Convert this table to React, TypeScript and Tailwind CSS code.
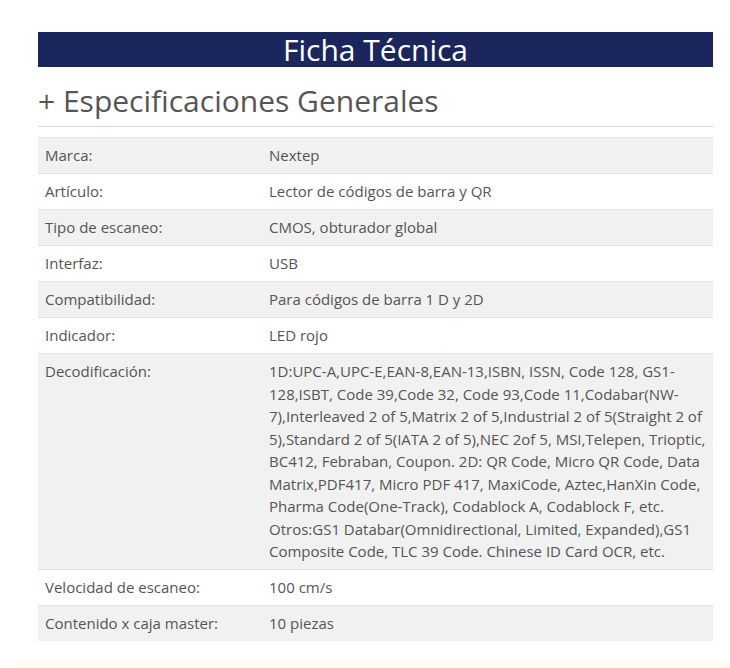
import React from "react";

interface Row { label: string; value: string; }

const rows: Row[] = [
  { label: "Marca:", value: "Nextep" },
  { label: "Artículo:", value: "Lector de códigos de barra y QR" },
  { label: "Tipo de escaneo:", value: "CMOS, obturador global" },
  { label: "Interfaz:", value: "USB" },
  { label: "Compatibilidad:", value: "Para códigos de barra 1 D y 2D" },
  { label: "Indicador:", value: "LED rojo" },
  {
    label: "Decodificación:",
    value:
      "1D:UPC-A,UPC-E,EAN-8,EAN-13,ISBN, ISSN, Code 128, GS1-128,ISBT, Code 39,Code 32, Code 93,Code 11,Codabar(NW-7),Interleaved 2 of 5,Matrix 2 of 5,Industrial 2 of 5(Straight 2 of 5),Standard 2 of 5(IATA 2 of 5),NEC 2of 5, MSI,Telepen, Trioptic, BC412, Febraban, Coupon. 2D: QR Code, Micro QR Code, Data Matrix,PDF417, Micro PDF 417, MaxiCode, Aztec,HanXin Code, Pharma Code(One-Track), Codablock A, Codablock F, etc. Otros:GS1 Databar(Omnidirectional, Limited, Expanded),GS1 Composite Code, TLC 39 Code. Chinese ID Card OCR, etc.",
  },
  { label: "Velocidad de escaneo:", value: "100 cm/s" },
  { label: "Contenido x caja master:", value: "10 piezas" },
];

export default function App() {
  return (
    <div className="relative h-[668px] w-[730px] overflow-hidden bg-white font-['Open_Sans',sans-serif] text-[#555]">
      <div className="ml-[38px] w-[675px] pt-[32px]">
        {/* cabecera */}
        <div className="flex h-[35px] items-center justify-center bg-[#1b275c] text-[30px] leading-none text-white">
          Ficha Técnica
        </div>

        <h2 className="mt-[14px] text-[30px] leading-[40px] text-[#555]">+ Especificaciones Generales</h2>
        <div className="mt-[5px] border-b border-[#d6d6d6]" />

        {/* tabla */}
        <div className="mt-[10px] text-[15px] leading-[22.5px]">
          {rows.map((r, i) => (
            <div
              key={i}
              className={`flex border-t border-[#e2e2e2] ${i % 2 === 0 ? "bg-[#f1f1f1]" : "bg-white"}`}
            >
              <div className="w-[224px] shrink-0 px-[7px] py-[6.25px]">{r.label}</div>
              <div className="flex-1 pl-[7px] pr-[4px] py-[6.25px]">{r.value}</div>
            </div>
          ))}
        </div>
      </div>
      <div className="absolute bottom-0 left-[18px] right-0 h-[7px] bg-[#fffcf0]" />
    </div>
  );
}
